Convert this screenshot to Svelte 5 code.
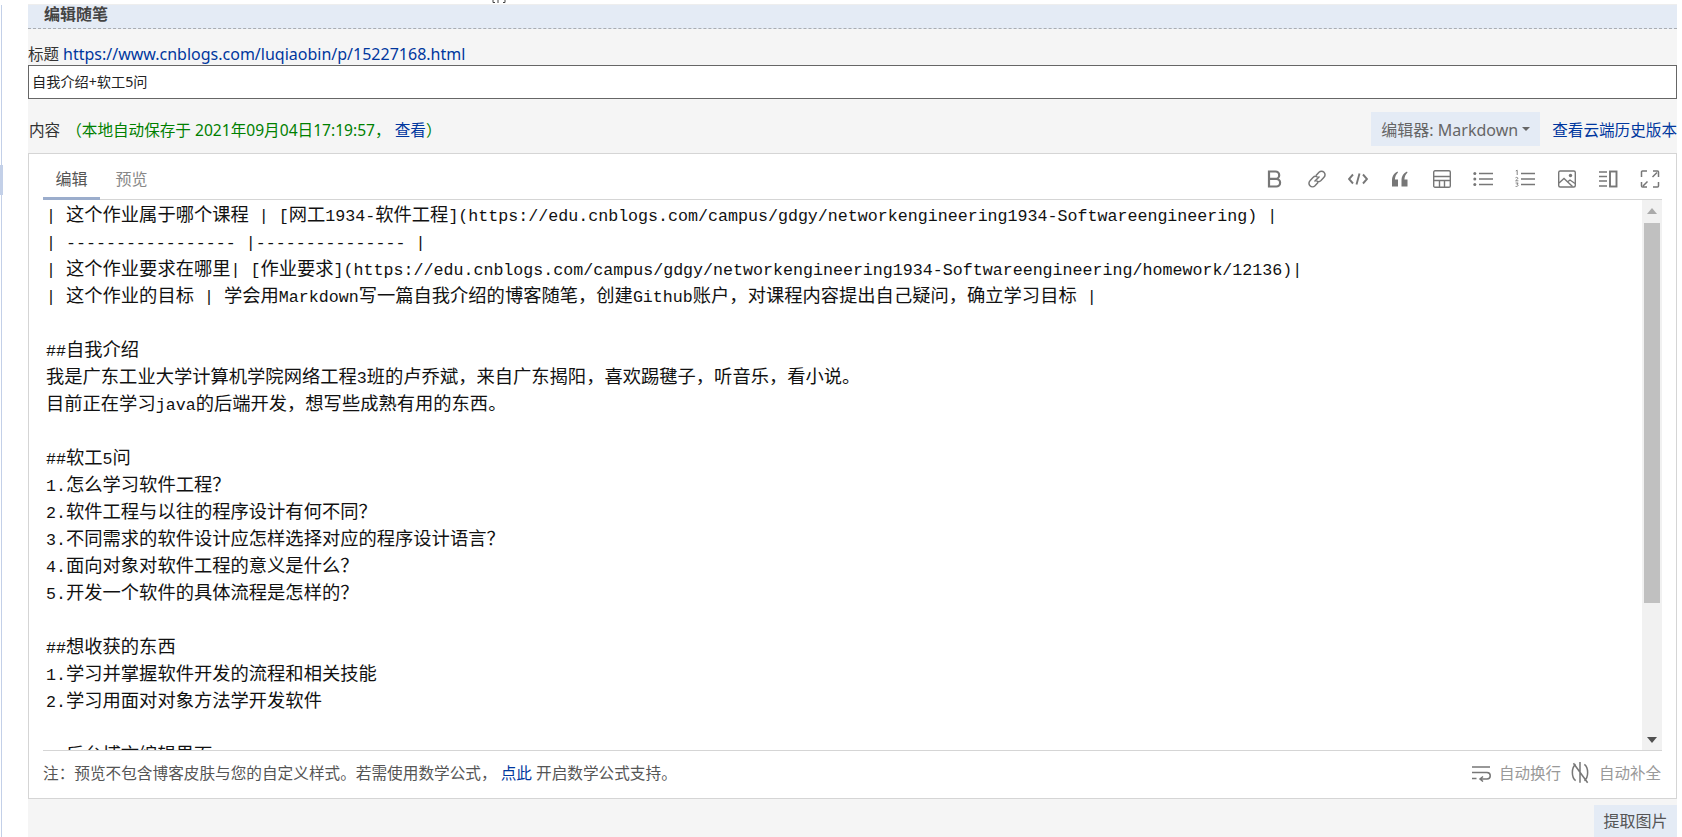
<script>
  const lines = [
    '| 这个作业属于哪个课程 | [网工1934-软件工程](https://edu.cnblogs.com/campus/gdgy/networkengineering1934-Softwareengineering) |',
    '| ----------------- |--------------- |',
    '| 这个作业要求在哪里| [作业要求](https://edu.cnblogs.com/campus/gdgy/networkengineering1934-Softwareengineering/homework/12136)|',
    '| 这个作业的目标 | 学会用Markdown写一篇自我介绍的博客随笔，创建Github账户，对课程内容提出自己疑问，确立学习目标 |',
    '',
    '##自我介绍',
    '我是广东工业大学计算机学院网络工程3班的卢乔斌，来自广东揭阳，喜欢踢毽子，听音乐，看小说。',
    '目前正在学习java的后端开发，想写些成熟有用的东西。',
    '',
    '##软工5问',
    '1.怎么学习软件工程？',
    '2.软件工程与以往的程序设计有何不同？',
    '3.不同需求的软件设计应怎样选择对应的程序设计语言？',
    '4.面向对象对软件工程的意义是什么？',
    '5.开发一个软件的具体流程是怎样的？',
    '',
    '##想收获的东西',
    '1.学习并掌握软件开发的流程和相关技能',
    '2.学习用面对对象方法学开发软件',
    '',
    '##后台博文编辑界面'
  ];
  const runs = (s) => s.split(/([\u0000-\u007f]+)/).filter(Boolean).map((t) => ({ t, lat: /^[\u0000-\u007f]/.test(t) }));
</script>

<div class="page">
  <div class="side"><div class="mark"></div></div>
  <div class="column">
    <div class="top">
      <svg class="crumb" width="14" height="4" viewBox="0 0 14 4"><path d="M1 0v2.5h2M6 0v3M13 0v2.5h-2" fill="none" stroke="#444"/></svg>
    </div>
    <main>
      <h2>编辑随笔</h2>
      <div class="title-label">标题 <a>https://www.cnblogs.com/luqiaobin/p/15227168.html</a></div>
      <div class="title-input">自我介绍+软工5问</div>
      <div class="content-row">
        <div class="left">内容<span class="saved">（本地自动保存于 2021年09月04日17:19:57， <a>查看</a>）</span></div>
        <div class="right">
          <span class="pick">编辑器: Markdown<i class="caret"></i></span>
          <a class="hist">查看云端历史版本</a>
        </div>
      </div>

      <section class="editor">
        <div class="head">
          <div class="tabs"><span class="tab on">编辑</span><span class="tab">预览</span></div>
          <div class="tools">
            <svg viewBox="0 0 20 20"><path d="M4 2.500h6.500a3.700 3.700 0 0 1 0 7.400H4zM4 9.900h7.300a3.800 3.800 0 0 1 0 7.600H4z" fill="none" stroke-width="2.200"/></svg>
            <svg viewBox="0 0 20 20"><path d="M9 6.500l3-3.200a3.500 3.500 0 0 1 5 5l-3 3.200a3.500 3.500 0 0 1-4.500.4M11 13.500l-3 3.200a3.500 3.500 0 0 1-5-5l3-3.200a3.500 3.500 0 0 1 4.500-.4M7.500 12.500l5-5" fill="none" stroke-width="1.500"/></svg>
            <svg viewBox="0 0 20 20"><path d="M5 5.500L1 10l4 4.500M15 5.500l4 4.500-4 4.500M11.500 4.500l-3 11" fill="none" stroke-width="1.900"/></svg>
            <svg viewBox="0 0 20 20"><path d="M2 17.500v-6C2 7.500 4 4 7.500 2.500l.5 1C6.200 5.200 5 7.500 4.900 10.500H8v7zM11.500 17.500v-6c0-4 2-7.500 5.500-9l.5 1c-1.800 1.700-3 4-3.100 7h3.100v7z" class="solid"/></svg>
            <svg viewBox="0 0 20 20"><path d="M3 1.800h14a1.300 1.300 0 0 1 1.300 1.300v13.800a1.300 1.300 0 0 1-1.300 1.300H3a1.300 1.300 0 0 1-1.300-1.300V3.100A1.300 1.300 0 0 1 3 1.800zM1.700 7.500h16.600M1.700 11.500h16.600M7.500 11.500v6.700M12.500 11.500v6.700" fill="none" stroke-width="1.400"/></svg>
            <svg viewBox="0 0 20 20"><path d="M6 4.500h14M6 10h14M6 15.500h14" fill="none" stroke-width="1.600"/><circle class="solid" cx="1.800" cy="4.500" r="1.500"/><circle class="solid" cx="1.800" cy="10" r="1.500"/><circle class="solid" cx="1.800" cy="15.500" r="1.500"/></svg>
            <svg viewBox="0 0 20 20"><path d="M6 4.500h14M6 10h14M6 15.500h14" fill="none" stroke-width="1.600"/><path d="M.8 2l1.400-.8V6M.5 8.800c1.600-1 3 0 2 1.200L.6 11.800h2.800M.6 14h2.600l-1.300 1.300c1.700 0 1.800 2.500-1.300 2.100" fill="none" stroke-width=".9"/></svg>
            <svg viewBox="0 0 20 20"><rect x="1.700" y="2" width="16.600" height="16" rx="1.500" fill="none" stroke-width="1.400"/><path d="M2 14l5-4.500 8.500 8M11 12.500l2-1.500 5 3.500" fill="none" stroke-width="1.400"/><circle class="solid" cx="13.500" cy="6.500" r="1.700"/></svg>
            <svg viewBox="0 0 20 20"><path d="M1 3h8M1 7.500h8M1 12h8M1 17h8" fill="none" stroke-width="1.500"/><rect x="12" y="2.500" width="6.500" height="15" fill="none" stroke-width="1.900"/></svg>
            <svg viewBox="0 0 20 20"><path d="M1.500 8V3a1 1 0 0 1 1-1H7M13 2h4.500a1 1 0 0 1 1 1v5M18.500 13v4a1 1 0 0 1-1 1H13M7 18H2.500a1 1 0 0 1-1-1v-4M17 3.500l-4.500 4.500M3 17l4.500-4.500" fill="none" stroke-width="1.500"/></svg>
          </div>
        </div>

        <div class="text-area">
          <div class="text">
            {#each lines as line}
              <div class="ln">{#each runs(line) as r}<span class={r.lat ? 'lat' : ''}>{r.t}</span>{/each}</div>
            {/each}
          </div>
          <div class="bar">
            <i class="arrow up"></i>
            <div class="thumb"></div>
            <i class="arrow down"></i>
          </div>
        </div>

        <div class="foot">
          <div class="note">注：预览不包含博客皮肤与您的自定义样式。若需使用数学公式， <a>点此</a> 开启数学公式支持。</div>
          <div class="opts">
            <svg width="20" height="18" viewBox="0 0 20 18"><path d="M1 3h18M1 8.500h15a3 3 0 0 1 0 6.500H9.500M1 14.500h4.500M12 12.500L9 15l3 2.500" fill="none" stroke-width="1.500"/></svg>
            <span class="opt">自动换行</span>
            <svg width="22" height="24" viewBox="0 0 20 22"><path d="M6 3C2 6 2 15 6 18M14 3c4 3 4 12 0 15M10 1v19M4 2l13 18" fill="none" stroke-width="1.400"/></svg>
            <span class="opt">自动补全</span>
          </div>
        </div>
      </section>

      <div class="extract"><span>提取图片</span></div>
    </main>
  </div>
</div>

<style>
  :global(body) { margin: 0; background: #fff; }
  .page {
    display: flex;
    height: 837px;
    overflow: hidden;
    font-family: "Noto Sans", "Noto Sans CJK SC", sans-serif;
    color: #333;
  }
  .side { width: 27px; margin-top: 5px; border-left: 1px solid #c3d0e8; margin-left: 1px; box-sizing: border-box; position: relative; }
  .mark { position: absolute; left: -2px; top: 160px; width: 3px; height: 30px; background: #c3d0e8; }
  .column { width: 1649px; display: flex; flex-direction: column; }
  .top { height: 5px; flex: none; position: relative; border-bottom: 1px solid #eee; box-sizing: border-box; }
  .crumb { position: absolute; left: 464px; top: 0; }
  main { flex: 1; min-height: 0; background: #f5f5f5; display: flex; flex-direction: column; }
  h2 {
    margin: 0;
    height: 23px;
    flex: none;
    background: #e4ebf5;
    border-bottom: 1px dashed #a9adb2;
    padding-left: 16px;
    font-size: 16px;
    font-weight: 700;
    line-height: 18px;
    color: #444;
  }
  a { color: #00379e; text-decoration: none; }
  .title-label { flex: none; margin-top: 12px; height: 24px; line-height: 26px; font-size: 15.500px; white-space: nowrap; }
  .title-label a { font-size: 16px; }
  .title-input {
    flex: none;
    height: 34px;
    box-sizing: border-box;
    border: 1px solid #666;
    background: #fff;
    padding-left: 3px;
    font-size: 14.200px;
    line-height: 32px;
    color: #222;
  }
  .content-row { flex: none; height: 54px; display: flex; justify-content: space-between; align-items: flex-end; padding-bottom: 7px; box-sizing: border-box; }
  .left { font-size: 15.600px; padding: 0 0 5px 1px; line-height: 22px; }
  .saved { color: #008000; margin-left: 6px; }
  .right { display: flex; align-items: center; gap: 12px; }
  .pick {
    width: 169px; height: 34px; box-sizing: border-box;
    background: #e4ebf5; color: #666; font-size: 16px;
    display: flex; align-items: center; justify-content: center;
  }
  .caret { width: 0; height: 0; margin-left: 4px; border: 4.500px solid transparent; border-top-color: #666; border-bottom: 0; }
  .hist { font-size: 15.600px; white-space: nowrap; }
  .editor {
    flex: none;
    height: 646px;
    box-sizing: border-box;
    background: #fff;
    border: 1px solid #d5d5d5;
    padding: 0 14px 0 14px;
    display: flex;
    flex-direction: column;
  }
  .head {
    height: 46px; flex: none;
    box-sizing: border-box;
    border-bottom: 1px solid #d5d5d5;
    display: flex;
    justify-content: space-between;
    align-items: flex-end;
  }
  .tabs { display: flex; gap: 3px; }
  .tab { width: 57px; height: 33px; line-height: 26px; text-align: center; font-size: 16px; color: #888; box-sizing: border-box; margin-bottom: -1px; }
  .tab.on { color: #555; border-bottom: 3px solid #9badcc; height: 34px; }
  .tools { display: flex; gap: 21.700px; align-self: center; margin-top: 5px; margin-right: 2px; }
  .tools svg { width: 20px; height: 20px; stroke: #777; }
  .tools svg .solid, .tools .solid { fill: #777; stroke: none; }
  .text-area { flex: 1; min-height: 0; display: flex; overflow: hidden; }
  .text { flex: 1; padding: 0 0 0 3px; overflow: hidden; font-family: "Noto Sans CJK SC", sans-serif; font-size: 18.300px; color: #111; }
  .ln { height: 27px; line-height: 27px; white-space: pre; }
  .lat { font-family: "Liberation Mono", monospace; font-size: 16.650px; }
  .bar { width: 20px; flex: none; background: #f1f1f1; display: flex; flex-direction: column; align-items: center; padding: 8px 0 7px; box-sizing: border-box; }
  .thumb { width: 16px; height: 380px; background: #c0c0c0; margin-top: 9px; }
  .arrow { width: 0; height: 0; border: 5px solid transparent; }
  .arrow.up { border-bottom: 6px solid #aaa; border-top: 0; }
  .arrow.down { border-top: 6px solid #505050; border-bottom: 0; margin-top: auto; }
  .foot {
    height: 48px; flex: none;
    box-sizing: border-box;
    border-top: 1px solid #d5d5d5;
    padding-bottom: 4px;
    display: flex;
    justify-content: space-between;
    align-items: center;
    color: #555;
  }
  .note { white-space: pre; font-size: 15.650px; }
  .opts { display: flex; align-items: center; margin-right: 1px; }
  .opts svg { stroke: #777; flex: none; margin-left: 8px; }
  .opt { font-size: 15.500px; color: #999; margin-left: 8px; }
  .extract { flex: 1; min-height: 0; display: flex; justify-content: flex-end; padding-top: 6px; }
  .extract span { width: 83px; background: #e4ebf5; color: #555; font-size: 16px; text-align: center; line-height: 32px; height: 32px; }
</style>
